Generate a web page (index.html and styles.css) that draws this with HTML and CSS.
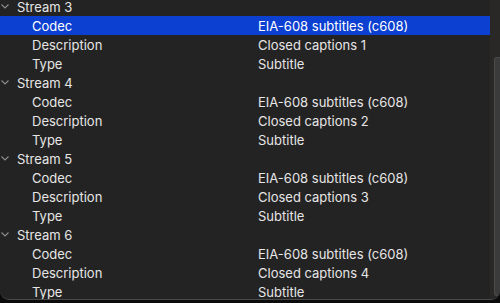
FILE: index.html
```html
<!DOCTYPE html>
<html lang="en">
<head>
    <meta charset="UTF-8">
    <title>Streams</title>
    <link rel="stylesheet" href="styles.css">
</head>
<body>
    <div class="window">
        <div class="outline">
            <div class="rows">
                <div class="row group"><span class="chevron"><svg width="8" height="5" viewBox="0 0 8 5"><path d="M0.5 0.5 L4 4 L7.5 0.5" fill="none" stroke="#8c8c8c" stroke-width="1.1"/></svg></span><span class="key">Stream 3</span></div>
                <div class="row selected"><span class="key">Codec</span><span class="val">EIA-608 subtitles (c608)</span></div>
                <div class="row"><span class="key">Description</span><span class="val">Closed captions 1</span></div>
                <div class="row"><span class="key">Type</span><span class="val">Subtitle</span></div>

                <div class="row group"><span class="chevron"><svg width="8" height="5" viewBox="0 0 8 5"><path d="M0.5 0.5 L4 4 L7.5 0.5" fill="none" stroke="#8c8c8c" stroke-width="1.1"/></svg></span><span class="key">Stream 4</span></div>
                <div class="row"><span class="key">Codec</span><span class="val">EIA-608 subtitles (c608)</span></div>
                <div class="row"><span class="key">Description</span><span class="val">Closed captions 2</span></div>
                <div class="row"><span class="key">Type</span><span class="val">Subtitle</span></div>

                <div class="row group"><span class="chevron"><svg width="8" height="5" viewBox="0 0 8 5"><path d="M0.5 0.5 L4 4 L7.5 0.5" fill="none" stroke="#8c8c8c" stroke-width="1.1"/></svg></span><span class="key">Stream 5</span></div>
                <div class="row"><span class="key">Codec</span><span class="val">EIA-608 subtitles (c608)</span></div>
                <div class="row"><span class="key">Description</span><span class="val">Closed captions 3</span></div>
                <div class="row"><span class="key">Type</span><span class="val">Subtitle</span></div>

                <div class="row group"><span class="chevron"><svg width="8" height="5" viewBox="0 0 8 5"><path d="M0.5 0.5 L4 4 L7.5 0.5" fill="none" stroke="#8c8c8c" stroke-width="1.1"/></svg></span><span class="key">Stream 6</span></div>
                <div class="row"><span class="key">Codec</span><span class="val">EIA-608 subtitles (c608)</span></div>
                <div class="row"><span class="key">Description</span><span class="val">Closed captions 4</span></div>
                <div class="row"><span class="key">Type</span><span class="val">Subtitle</span></div>
            </div>
        </div>
        <div class="scrollbar">
            <div class="thumb"></div>
        </div>
    </div>
</body>
</html>
```

FILE: styles.css
```css
* {
    margin: 0;
    padding: 0;
    box-sizing: border-box;
}

body {
    font-family: Inter, "Liberation Sans", sans-serif;
    font-size: 13px;
    background: #0b0b0b;
    width: 500px;
    height: 303px;
    overflow: hidden;
}

.window {
    display: flex;
    height: 300px;
    background: #242323;
    border-radius: 0 0 9px 9px;
    border-bottom: 1px solid #4a4a4a;
    overflow: hidden;
}

.outline {
    flex: 1;
    overflow: hidden;
}

.rows {
    margin-top: -3px;
}

.row {
    display: flex;
    align-items: center;
    height: 19px;
    color: #e6e6e6;
}

.row .key {
    width: 258px;
    padding-left: 32px;
    flex-shrink: 0;
}

.row.group .key {
    padding-left: 7px;
}

.chevron {
    width: 10px;
    padding-left: 1px;
    display: flex;
    align-items: center;
}

.row.selected {
    background: #0b40d0;
    color: #ffffff;
}

.scrollbar {
    width: 10px;
    background: #2a2727;
    padding: 57px 0 3px 4px;
}

.thumb {
    height: 100%;
    background: #3c3b3b;
    border: 1px solid #4a4848;
    border-right: none;
    border-radius: 3px 0 0 3px;
}
```
